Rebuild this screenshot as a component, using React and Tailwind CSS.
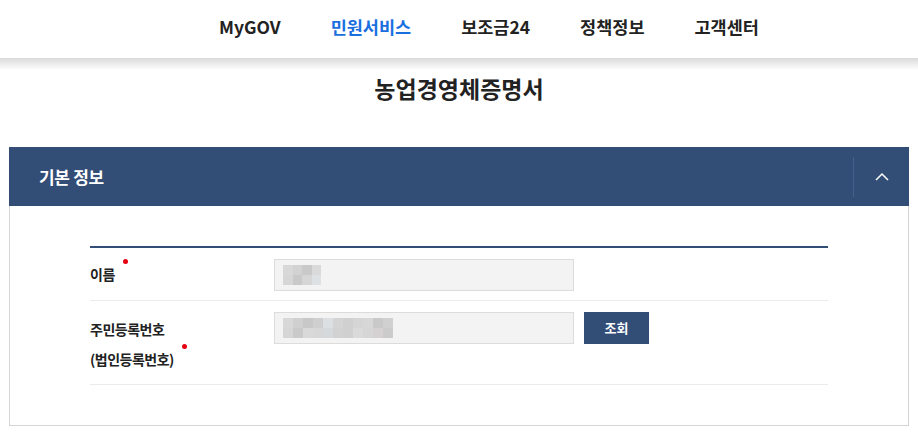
const NAV = [
  { label: 'MyGOV' },
  { label: '민원서비스', active: true },
  { label: '보조금24' },
  { label: '정책정보' },
  { label: '고객센터' },
]

// pixelated (masked) values inside the inputs
const NAME_CELLS = [
  ['bg-[#d8d8d8]', 'bg-[#d2d2d2]', 'bg-[#c9c9c9]', 'bg-[#dadada]'],
  ['bg-[#d6d6d6]', 'bg-[#c9c9c9]', 'bg-[#d6d6d6]', 'bg-[#dde1e3]'],
]

const ID_CELLS = [
  ['bg-[#d8d8d8]', 'bg-[#d0d0d0]', 'bg-[#c8c8c8]', 'bg-[#cfcfcf]', 'bg-[#dde0e2]', 'bg-[#d4d4d4]', 'bg-[#d0d0d0]', 'bg-[#d5d5d5]', 'bg-[#d7d7d7]', 'bg-[#c9c9c9]', 'bg-[#d0d0d0]'],
  ['bg-[#d6d6d6]', 'bg-[#cacaca]', 'bg-[#d9d9d9]', 'bg-[#d7d7d7]', 'bg-[#d6d9db]', 'bg-[#d2d2d2]', 'bg-[#d0d0d0]', 'bg-[#dadada]', 'bg-[#d6d6d6]', 'bg-[#d5d1d2]', 'bg-[#cbcbcb]'],
]

function Pixels({ rows, cell }) {
  return (
    <div className="flex flex-col">
      {rows.map((row, i) => (
        <div key={i} className="flex">
          {row.map((c, j) => (
            <div key={j} className={`${cell} ${c}`} />
          ))}
        </div>
      ))}
    </div>
  )
}

function Required() {
  return <span className="relative -top-[15px] ml-[8px] inline-block w-[5px] h-[5px] rounded-full bg-[#e60012] align-middle" />
}

function MaskedInput({ rows, cell, top }) {
  return (
    <div className={`w-[300px] h-[32px] bg-[#f3f3f3] border border-[#dcdcdc] pl-[8px] ${top}`}>
      <Pixels rows={rows} cell={cell} />
    </div>
  )
}

export default function App() {
  return (
    <div className="w-[918px] h-[436px] bg-white overflow-hidden font-['Noto_Sans_CJK_KR','Noto_Sans',sans-serif] text-[#222]">
      {/* top nav */}
      <header className="h-[58px] flex items-center pl-[219px] gap-[50px] pb-[4px]">
        {NAV.map(item => (
          <a
            key={item.label}
            className={[
              'text-[17.5px] font-bold leading-none',
              item.active ? 'text-[#1a6fdf]' : 'text-[#222]',
            ].join(' ')}
          >
            {item.label}
          </a>
        ))}
      </header>
      <div className="h-[12px] bg-linear-to-b from-[#dadada] to-white" />

      <h1 className="pt-[2px] mb-[43px] text-center text-[23px] leading-[32px] font-bold text-[#222]">
        농업경영체증명서
      </h1>

      {/* section panel */}
      <section className="mx-[9px] w-[900px]">
        <div className="h-[59px] bg-[#324d76] flex items-center">
          <h2 className="flex-1 pl-[30px] text-[17px] font-bold text-white tracking-[-0.3px]">기본 정보</h2>
          <div className="w-px h-[40px] bg-[#45608a]" />
          <button className="w-[55px] h-full flex items-center justify-center">
            <svg width="14" height="9" viewBox="0 0 14 9" fill="none">
              <polyline points="1,8 7,2 13,8" stroke="white" strokeWidth="1.5" />
            </svg>
          </button>
        </div>

        <div className="border-x border-b border-[#d5d5d5] pt-[40px] pb-[40px]">
          <div className="w-[738px] mx-auto border-t-2 border-[#324d76]">
            <div className="flex items-start border-b border-[#ebebeb]">
              <div className="w-[184px] py-[11px] leading-[30px] text-[14px] font-bold tracking-[-0.5px]">
                이름<Required />
              </div>
              <MaskedInput rows={NAME_CELLS} cell="w-[9.5px] h-[10px]" top="pt-[5px] mt-[11px]" />
            </div>

            <div className="flex items-start border-b border-[#ebebeb]">
              <div className="w-[184px] pt-[13px] pb-[10px] leading-[30px] text-[14px] font-bold tracking-[-0.5px]">
                주민등록번호
                <br />
                (법인등록번호)<Required />
              </div>
              <div className="flex mt-[11px]">
                <MaskedInput rows={ID_CELLS} cell="w-[10px] h-[10px]" top="pt-[5px]" />
                <button className="ml-[10px] w-[65px] h-[32px] bg-[#324d76] text-white text-[13px] font-bold">
                  조회
                </button>
              </div>
            </div>
          </div>
        </div>
      </section>
    </div>
  )
}
